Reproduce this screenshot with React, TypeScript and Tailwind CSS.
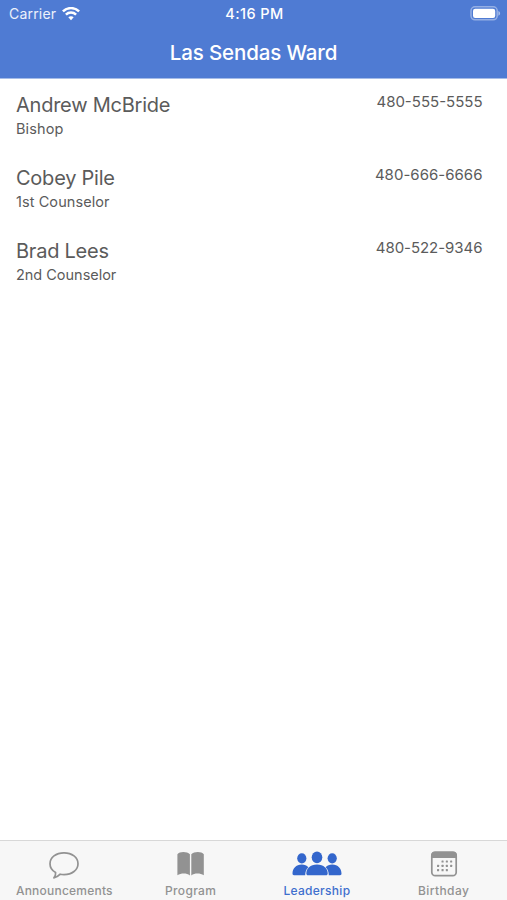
import React from "react";

type Person = { name: string; role: string; phone: string; roleTracking: string; phoneTracking: string };

const people: Person[] = [
  { name: "Andrew McBride", role: "Bishop", phone: "480-555-5555", roleTracking: "tracking-[0.1px]", phoneTracking: "tracking-[0px]" },
  { name: "Cobey Pile", role: "1st Counselor", phone: "480-666-6666", roleTracking: "tracking-[0.08px]", phoneTracking: "tracking-[0.02px]" },
  { name: "Brad Lees", role: "2nd Counselor", phone: "480-522-9346", roleTracking: "tracking-[-0.02px]", phoneTracking: "tracking-[-0.04px]" },
];

function WifiIcon() {
  return (
    <svg width="18" height="14" viewBox="0 0 18 14" fill="none" stroke="white" strokeWidth="2.5">
      <path d="M0.9 4.4C5.4 0 12.6 0 17.1 4.4" />
      <path d="M3.9 7.7C6.8 4.9 11.2 4.9 14.1 7.7" />
      <path d="M6.3 10.3C7.8 8.9 10.2 8.9 11.7 10.3L9 13.2Z" fill="white" stroke="none" />
    </svg>
  );
}

function BatteryIcon() {
  return (
    <svg width="31" height="15" viewBox="0 0 31 15" fill="none">
      <rect x="1" y="0.8" width="26.2" height="13" rx="4" stroke="white" strokeOpacity="0.4" strokeWidth="1.5" />
      <rect x="3" y="2.7" width="22.2" height="9.2" rx="2.2" fill="white" />
      <path d="M28.4 5C30.7 6.1 30.7 8.6 28.4 9.7Z" fill="white" fillOpacity="0.5" />
    </svg>
  );
}

function BubbleIcon() {
  return (
    <svg width="32" height="30" viewBox="0 0 32 30" fill="none" stroke="#929292" strokeWidth="1.7" strokeLinejoin="round">
      <path d="M16 2.8C24 2.8 30 7.4 30 13.7C30 20 24 24.6 16 24.6C14.7 24.6 13.4 24.5 12.2 24.2C10.5 26 8.2 27.5 5.9 27.8C7.5 26.2 7.8 24.4 7.6 22.5C4 20.5 2 17.3 2 13.7C2 7.4 8 2.8 16 2.8Z" />
    </svg>
  );
}

function BookIcon() {
  return (
    <svg width="28" height="30" viewBox="0 0 28 30" fill="#929292">
      <path d="M0.4 4.2C2.6 1.2 10.1 1.3 12.9 4.2V25.4C9.6 22.9 4 23 0.4 25.3Z" />
      <path d="M14.3 4.2C17.1 1.3 24.6 1.2 26.8 4.2V25.3C23.2 23 17.6 22.9 14.3 25.4Z" />
    </svg>
  );
}

function PeopleIcon() {
  return (
    <svg width="50" height="30" viewBox="0 0 50 30" fill="#3366cc">
      <ellipse cx="9.8" cy="8.3" rx="4.6" ry="5.1" />
      <ellipse cx="40.2" cy="8.3" rx="4.6" ry="5.1" />
      <path d="M0.5 23.5C0.5 18.5 4 14.5 9.8 14.5C12.7 14.5 14.7 15.5 16.3 17.2C14.3 19 13.3 21.4 13.2 25.2H2C1 25.2 0.5 24.5 0.5 23.5Z" />
      <path d="M49.5 23.5C49.5 18.5 46 14.5 40.2 14.5C37.3 14.5 35.3 15.5 33.7 17.2C35.7 19 36.7 21.4 36.8 25.2H48C49 25.2 49.5 24.5 49.5 23.5Z" />
      <ellipse cx="25" cy="7.3" rx="5.3" ry="5.9" />
      <path d="M14.3 23.4C14.3 18.5 18.2 14.4 25 14.4C31.8 14.4 35.7 18.5 35.7 23.4C35.7 24.6 35 25.2 34 25.2H16C15 25.2 14.3 24.6 14.3 23.4Z" />
    </svg>
  );
}

const calendarDots = [
  [11.5, 10.4], [15.8, 10.4], [20.1, 10.4],
  [7, 14.8], [11.5, 14.8], [15.8, 14.8], [20.1, 14.8],
  [7, 19.1], [11.5, 19.1], [15.8, 19.1],
];

function CalendarIcon() {
  return (
    <svg width="28" height="30" viewBox="0 0 28 30" fill="none">
      <rect x="1.8" y="2.4" width="24.4" height="23.3" rx="3.4" stroke="#929292" strokeWidth="1.7" />
      <path d="M1 8V5.5C1 3 2.5 1.6 4.8 1.6H23.2C25.6 1.6 27 3 27 5.5V8Z" fill="#929292" />
      {calendarDots.map(([x, y]) => (
        <rect key={`${x}-${y}`} x={x} y={y} width="2.1" height="2.1" rx="0.5" fill="#929292" />
      ))}
    </svg>
  );
}

const tabs = [
  { label: "Announcements", icon: <BubbleIcon />, className: "pl-[2px] text-[#929292] tracking-[0.22px]" },
  { label: "Program", icon: <BookIcon />, className: "pl-px text-[#929292] tracking-[0.35px]" },
  { label: "Leadership", icon: <PeopleIcon />, className: "text-[#3f6fce] tracking-[0.3px]" },
  { label: "Birthday", icon: <CalendarIcon />, className: "text-[#929292] tracking-[0.4px]" },
];

export default function App() {
  return (
    <div className="flex h-[900px] w-[507px] flex-col overflow-hidden bg-white font-['Inter',sans-serif] text-[#5b5b5b]">
      <header className="h-[79px] shrink-0 border-b border-[#a5bce8] bg-[#4f7bd3] text-white">
        <div className="grid h-[27px] grid-cols-3 items-center pr-[6px] pl-[8px]">
          <div className="flex items-center gap-[6px] pl-px text-[14px] leading-5">
            <span className="tracking-[0.2px] text-white/90">Carrier</span>
            <WifiIcon />
          </div>
          <div className="text-center text-[14.5px] leading-5 font-medium tracking-[0.4px]">4:16 PM</div>
          <div className="flex justify-end"><BatteryIcon /></div>
        </div>
        <h1 className="pt-[12px] text-center text-[20.5px] leading-7 font-medium tracking-[-0.13px]">Las Sendas Ward</h1>
      </header>
      <main className="grow">
        {people.map((p) => (
          <section key={p.name} className="flex h-[73px] justify-between pt-[12px] pr-[24.5px] pl-4">
            <div>
              <h2 className="text-[20px] leading-7 tracking-[-0.24px]">{p.name}</h2>
              <p className={`text-[14.5px] leading-5 ${p.roleTracking}`}>{p.role}</p>
            </div>
            <span className={`pt-px text-[15px] leading-5 ${p.phoneTracking}`}>{p.phone}</span>
          </section>
        ))}
      </main>
      <nav className="grid h-[60px] shrink-0 grid-cols-4 border-t border-[#d8d8d8] bg-[#f7f7f7]">
        {tabs.map((t) => (
          <button key={t.label} className={`flex flex-col items-center pt-[9px] text-[12px] leading-4 font-medium ${t.className}`}>
            {t.icon}
            <span className="mt-[3px]">{t.label}</span>
          </button>
        ))}
      </nav>
    </div>
  );
}
